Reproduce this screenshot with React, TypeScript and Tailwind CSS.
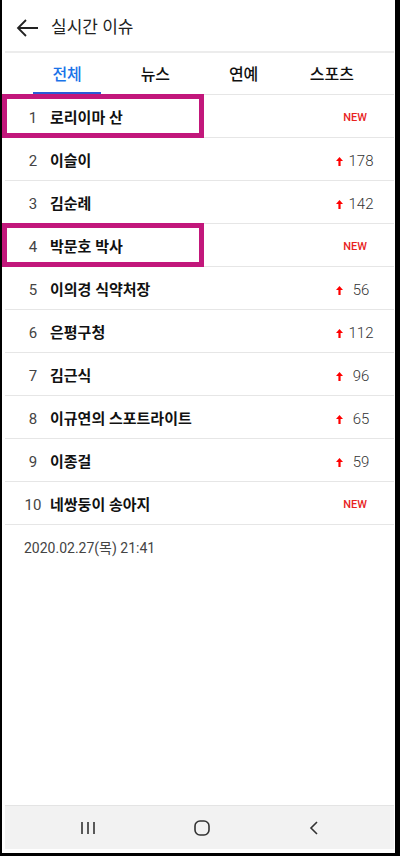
const tabs = ["전체", "뉴스", "연예", "스포츠"];

type Item = { rank: number; name: string; change: number | "NEW" };

const items: Item[] = [
  { rank: 1, name: "로리이마 산", change: "NEW" },
  { rank: 2, name: "이슬이", change: 178 },
  { rank: 3, name: "김순례", change: 142 },
  { rank: 4, name: "박문호 박사", change: "NEW" },
  { rank: 5, name: "이의경 식약처장", change: 56 },
  { rank: 6, name: "은평구청", change: 112 },
  { rank: 7, name: "김근식", change: 96 },
  { rank: 8, name: "이규연의 스포트라이트", change: 65 },
  { rank: 9, name: "이종걸", change: 59 },
  { rank: 10, name: "네쌍둥이 송아지", change: "NEW" },
];

function UpArrow() {
  return (
    <svg width="7" height="9" viewBox="0 0 7 9" className="shrink-0">
      <path d="M3.5 0 L7 4 L4.6 4 L4.6 9 L2.4 9 L2.4 4 L0 4 Z" fill="#f00" />
    </svg>
  );
}

function Row({ item }: { item: Item }) {
  const highlighted = item.rank === 1 || item.rank === 4;
  return (
    <div className="relative flex h-[43px] items-center border-b border-[#e6e6e6] pt-1">
      <span className="w-[42px] pl-[14px] text-center text-[15px] text-[#444]">{item.rank}</span>
      <span className="ml-[3px] flex-1 text-[15px] font-bold text-[#111]">{item.name}</span>
      {item.change === "NEW" ? (
        <span className="mr-[25px] w-[28px] text-center text-[11px] font-medium text-[#e8231e]">NEW</span>
      ) : (
        <div className="mr-[15px] flex items-center">
          <UpArrow />
          <span className="w-[36px] text-center text-[15px] font-light text-[#333]">{item.change}</span>
        </div>
      )}
      {highlighted && (
        <div className="absolute left-[-3px] top-[-1px] h-[44px] w-[202px] border-[5px] border-[#c2177b]" />
      )}
    </div>
  );
}

export default function App() {
  return (
    <div
      className="flex h-[856px] w-[400px] flex-col border-b-[3px] border-l-2 border-r-[5px] border-black bg-white"
      style={{ fontFamily: 'Roboto, "Noto Sans CJK KR", sans-serif' }}
    >
      <div className="flex flex-1 flex-col px-[3px] pr-px">
        {/* header */}
        <div className="flex h-[53px] items-center border-b-2 border-[#ececec] pt-1">
          <svg width="24" height="20" viewBox="0 0 24 20" className="ml-[11px]">
            <path d="M22 10 H2 M10 2 L2 10 L10 18" fill="none" stroke="#222" strokeWidth="1.8" />
          </svg>
          <span className="ml-[11px] text-[17px] text-[#222]">실시간 이슈</span>
        </div>

        {/* tabs */}
        <div className="flex h-[42px] border-b border-[#e6e6e6] px-[18px]">
          {tabs.map((t, i) => (
            <div key={t} className="flex flex-1 flex-col items-center">
              <div
                className={
                  i === 0
                    ? "flex flex-1 items-center pt-1 text-[16px] font-medium text-[#1a73e8]"
                    : "flex flex-1 items-center pt-1 text-[16px] font-medium text-[#111]"
                }
              >
                {t}
              </div>
              <div className={i === 0 ? "h-[2px] w-[68px] bg-[#2a5bd7]" : "h-[2px]"} />
            </div>
          ))}
        </div>

        {items.map((it) => (
          <Row key={it.rank} item={it} />
        ))}

        <div className="pl-[19px] pt-[13px] text-[14px] text-[#444]">2020.02.27(목) 21:41</div>

        <div className="flex-1" />

        {/* nav bar */}
        <div className="mb-[4px] flex h-[44px] items-center justify-around border-t border-[#e4e4e4] bg-[#f2f2f2] px-[26px]">
          <svg width="16" height="14" viewBox="0 0 16 14">
            <path d="M2 1 V13 M8 1 V13 M14 1 V13" stroke="#333" strokeWidth="1.6" />
          </svg>
          <svg width="16" height="16" viewBox="0 0 16 16">
            <rect x="1" y="1" width="14" height="14" rx="5" fill="none" stroke="#333" strokeWidth="1.6" />
          </svg>
          <svg width="10" height="14" viewBox="0 0 10 14">
            <path d="M8 1 L2 7 L8 13" fill="none" stroke="#333" strokeWidth="1.6" />
          </svg>
        </div>
      </div>
    </div>
  );
}
